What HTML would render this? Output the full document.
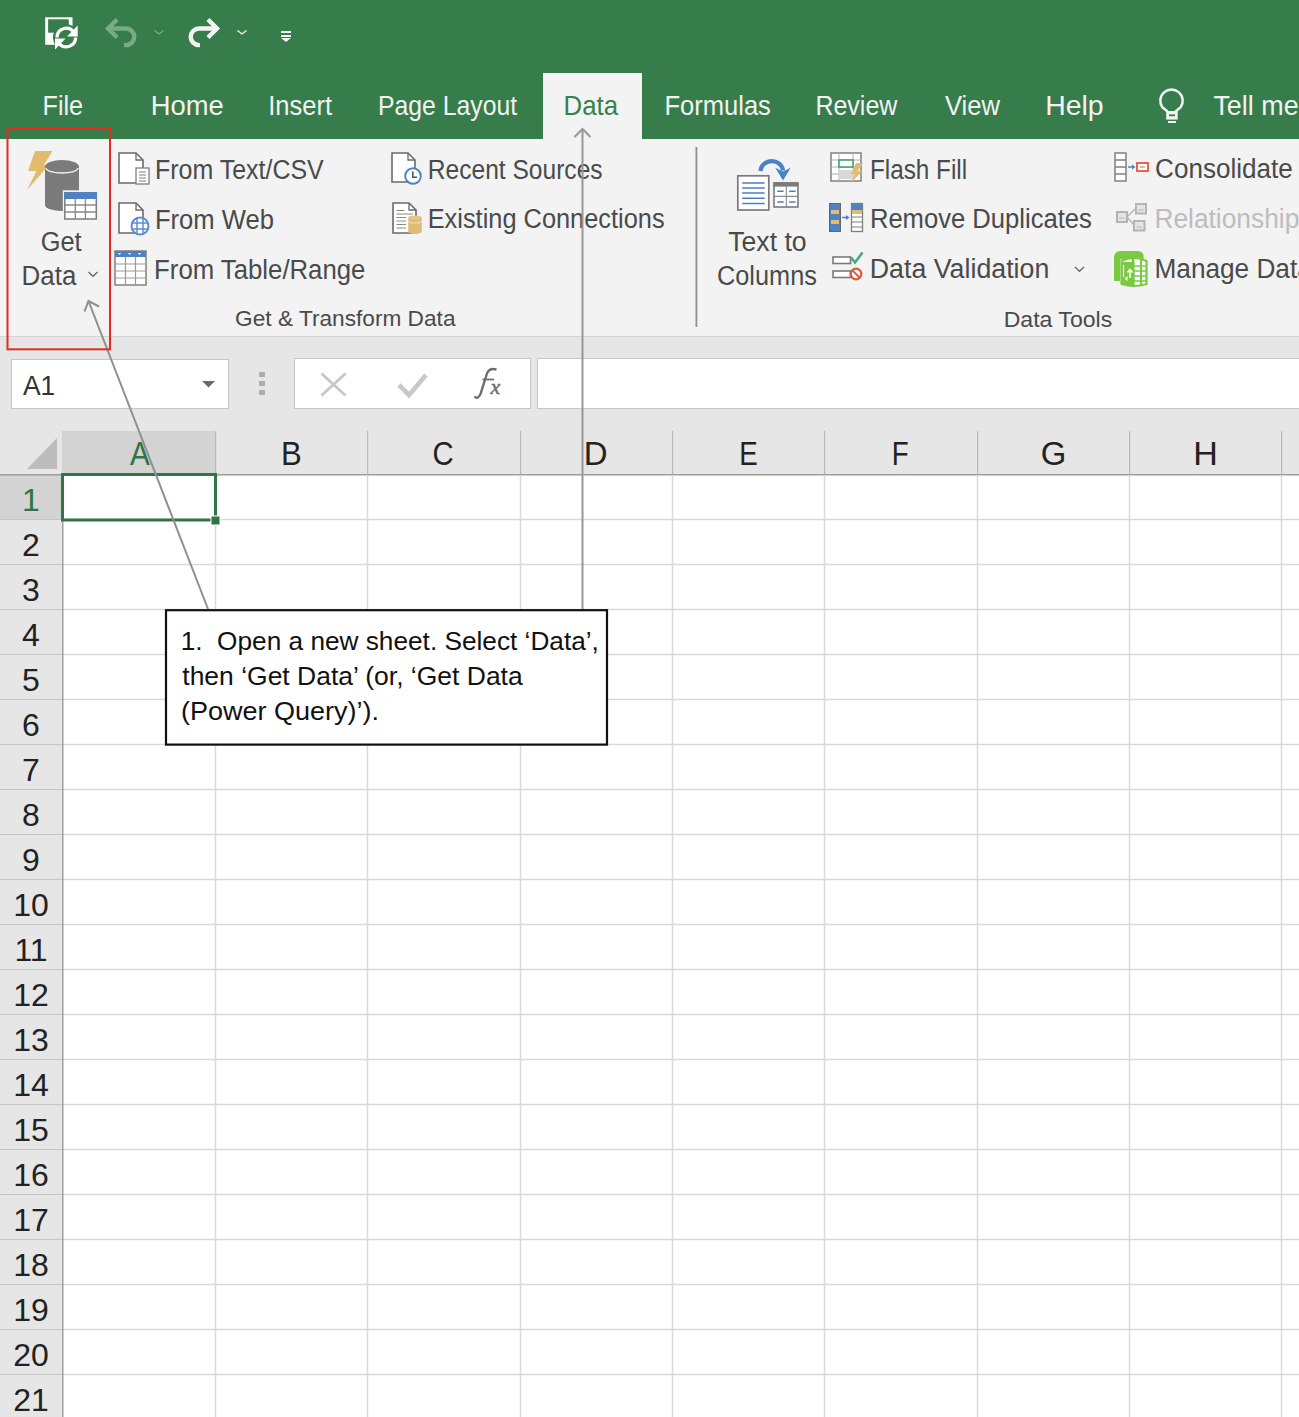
<!DOCTYPE html>
<html><head><meta charset="utf-8"><style>
html,body{margin:0;padding:0;background:#fff;overflow:hidden}
svg{display:block;font-family:"Liberation Sans",sans-serif}
</style></head><body>
<svg width="1299" height="1417" viewBox="0 0 1299 1417">
<rect x="0" y="0" width="1299" height="139" fill="#377d4c"/>
<rect x="0" y="139" width="1299" height="197" fill="#f2f3f2"/>
<rect x="543" y="73" width="99" height="66" fill="#f2f3f2"/>
<rect x="0" y="336" width="1299" height="1" fill="#d4d4d4"/>
<rect x="0" y="337" width="1299" height="138" fill="#e5e6e5"/>
<rect x="45.2" y="17.3" width="27.3" height="27.5" fill="#fff"/><rect x="48.1" y="19.3" width="20.7" height="13.4" fill="#377d4c"/><circle cx="66.3" cy="37.5" r="13.3" fill="#377d4c"/><path d="M57.0 37.5 A9.3 9.3 0 0 1 73.6 31.8" fill="none" stroke="#fff" stroke-width="3.3"/><path d="M75.6 37.5 A9.3 9.3 0 0 1 59.0 43.2" fill="none" stroke="#fff" stroke-width="3.3"/><path d="M77.7 36.5 V25.5 L67 36.5 Z" fill="#fff"/><path d="M55 38.5 V49.5 L65.5 38.5 Z" fill="#fff"/>
<path d="M108 28.5 H126 A8.3 8.3 0 0 1 126 45.1 H124" fill="none" stroke="#79ab85" stroke-width="4.4"/><path d="M115.5 21 L108 28.5 L115.5 36" fill="none" stroke="#79ab85" stroke-width="4.4" stroke-linecap="square"/>
<path d="M154.5 30.5 L159 34 L163.5 30.5" fill="none" stroke="#79ab85" stroke-width="1.3"/>
<path d="M217 28.5 H199 A8.3 8.3 0 0 0 199 45.1 H200" fill="none" stroke="#f4f4f4" stroke-width="4.4"/><path d="M209.5 21 L217 28.5 L209.5 36" fill="none" stroke="#f4f4f4" stroke-width="4.4" stroke-linecap="square"/>
<path d="M237.5 30.5 L242 34 L246.5 30.5" fill="none" stroke="#f4f4f4" stroke-width="1.3"/>
<rect x="281" y="31" width="10" height="2" fill="#f4f4f4"/><rect x="281" y="35" width="10" height="2" fill="#f4f4f4"/><path d="M281 38 H291 L286 42 Z" fill="#f4f4f4"/>
<text x="42.5" y="114.5" font-size="26.89" textLength="40.6" lengthAdjust="spacingAndGlyphs" fill="#f2f2f2" >File</text>
<text x="150.8" y="114.5" font-size="26.89" textLength="73.0" lengthAdjust="spacingAndGlyphs" fill="#f2f2f2" >Home</text>
<text x="268.2" y="114.5" font-size="26.89" textLength="63.9" lengthAdjust="spacingAndGlyphs" fill="#f2f2f2" >Insert</text>
<text x="378.0" y="114.5" font-size="26.89" textLength="139.2" lengthAdjust="spacingAndGlyphs" fill="#f2f2f2" >Page Layout</text>
<text x="664.4" y="114.5" font-size="26.89" textLength="106.5" lengthAdjust="spacingAndGlyphs" fill="#f2f2f2" >Formulas</text>
<text x="815.4" y="114.5" font-size="26.89" textLength="82.0" lengthAdjust="spacingAndGlyphs" fill="#f2f2f2" >Review</text>
<text x="944.9" y="114.5" font-size="26.89" textLength="55.0" lengthAdjust="spacingAndGlyphs" fill="#f2f2f2" >View</text>
<text x="1045.2" y="114.5" font-size="26.89" textLength="58.5" lengthAdjust="spacingAndGlyphs" fill="#f2f2f2" >Help</text>
<text x="1213.4" y="114.5" font-size="26.89" textLength="85.2" lengthAdjust="spacingAndGlyphs" fill="#f2f2f2" >Tell me</text>
<text x="563.5" y="114.5" font-size="26.89" textLength="54.5" lengthAdjust="spacingAndGlyphs" fill="#34824f" >Data</text>
<path d="M1167.5 111.5 L1162.3 107.1 A11.2 11.2 0 1 1 1180.7 107.1 L1175.5 111.5" fill="none" stroke="#f2f2f2" stroke-width="2.5"/><rect x="1166.2" y="111" width="11.5" height="8.6" fill="#f2f2f2"/><rect x="1169" y="114.4" width="6" height="1.8" fill="#377d4c"/><rect x="1168" y="121" width="8" height="2" fill="#f2f2f2"/>
<path d="M35 151 L52.5 151 L44 165 L49 165 L27 190 L36.5 171 L28 171 Z" fill="#e3bb6d"/>
<path d="M45 168 V205 A17 6 0 0 0 79 205 V168 Z" fill="#7b7b7b"/><ellipse cx="62" cy="167" rx="17" ry="7" fill="#7b7b7b"/><path d="M46 168 A16 5 0 0 0 78 168" fill="none" stroke="#f2f3f2" stroke-width="1.3"/>
<rect x="62.8" y="190.3" width="35.6" height="31" fill="#f2f3f2"/><rect x="64.8" y="192.8" width="31.5" height="26.2" fill="#fff" stroke="#7b7b7b" stroke-width="1.5"/><rect x="64.1" y="192.1" width="32.9" height="6.9" fill="#4f82c3"/><path d="M64.8 205 H96.3 M64.8 212 H96.3 M75.3 199 V219 M85.4 199 V219" stroke="#8a8a8a" stroke-width="1.3"/>
<text x="40.7" y="250.8" font-size="27.62" textLength="40.9" lengthAdjust="spacingAndGlyphs" fill="#4a4a4a" >Get</text>
<text x="21.6" y="285.3" font-size="27.62" textLength="54.7" lengthAdjust="spacingAndGlyphs" fill="#4a4a4a" >Data</text>
<path d="M88.5 272 L93 276.3 L97.5 272" fill="none" stroke="#666" stroke-width="1.3"/>
<path d="M119 153 H136 L143 160 V183 H119 Z" fill="#fff" stroke="#6a6a6a" stroke-width="1.6"/><path d="M136 153 V160 H143" fill="none" stroke="#6a6a6a" stroke-width="1.3"/>
<rect x="136" y="168" width="13" height="16" fill="#fff" stroke="#808080" stroke-width="1.3"/><path d="M139 172 H146 M139 175 H146 M139 178 H146 M139 181 H146" stroke="#808080" stroke-width="1"/>
<text x="155.0" y="178.8" font-size="27.62" textLength="168.7" lengthAdjust="spacingAndGlyphs" fill="#4a4a4a" >From Text/CSV</text>
<path d="M119 203 H136 L143 210 V233 H119 Z" fill="#fff" stroke="#6a6a6a" stroke-width="1.6"/><path d="M136 203 V210 H143" fill="none" stroke="#6a6a6a" stroke-width="1.3"/>
<circle cx="140" cy="226" r="8.5" fill="#fff" stroke="#5b8fd0" stroke-width="2"/><path d="M131.5 223 H148.5 M131.5 229 H148.5 M137 218 V234 M143 218 V234" stroke="#5b8fd0" stroke-width="1.5"/>
<text x="154.9" y="228.5" font-size="27.62" textLength="119.0" lengthAdjust="spacingAndGlyphs" fill="#4a4a4a" >From Web</text>
<rect x="115" y="251" width="31" height="34" fill="#fff" stroke="#808080" stroke-width="1.5"/><rect x="115" y="251" width="31" height="6" fill="#4f82c3"/><path d="M118 253 L121 253 L119.5 255 Z M128 253 L131 253 L129.5 255 Z M138 253 L141 253 L139.5 255 Z" fill="#fff"/><path d="M115.5 264 H145.5 M115.5 271 H145.5 M115.5 278 H145.5 M125.5 257 V285 M135.5 257 V285" stroke="#9a9a9a" stroke-width="1.2"/>
<text x="154.1" y="279.0" font-size="27.62" textLength="211.3" lengthAdjust="spacingAndGlyphs" fill="#4a4a4a" >From Table/Range</text>
<path d="M392 153 H408 L415 160 V182 H392 Z" fill="#fff" stroke="#6a6a6a" stroke-width="1.6"/><path d="M408 153 V160 H415" fill="none" stroke="#6a6a6a" stroke-width="1.3"/>
<circle cx="413" cy="176" r="7.8" fill="#fff" stroke="#4a82c8" stroke-width="1.9"/><path d="M412.8 171.5 V177.2 H417" fill="none" stroke="#555" stroke-width="1.6"/>
<text x="427.8" y="178.5" font-size="27.62" textLength="174.8" lengthAdjust="spacingAndGlyphs" fill="#4a4a4a" >Recent Sources</text>
<path d="M393 203 H409 L416 210 V233 H393 Z" fill="#fff" stroke="#6a6a6a" stroke-width="1.6"/><path d="M409 203 V210 H416" fill="none" stroke="#6a6a6a" stroke-width="1.3"/>
<path d="M396.5 210.5 H404.5 M396.5 214 H413 M396.5 217.5 H406 M396.5 221 H406 M396.5 224.5 H406 M396.5 228 H406" stroke="#8a8a8a" stroke-width="1.1"/><path d="M408.2 217.5 V231.5 A6.8 2.5 0 0 0 421.8 231.5 V217.5 Z" fill="#e0bd74"/><ellipse cx="415" cy="217.5" rx="6.8" ry="2" fill="#e6c786"/><path d="M408.2 221 A6.8 2 0 0 0 421.8 221" fill="none" stroke="#f2e3c0" stroke-width="1"/>
<text x="427.7" y="228.4" font-size="27.62" textLength="236.9" lengthAdjust="spacingAndGlyphs" fill="#4a4a4a" >Existing Connections</text>
<text x="235.1" y="326.4" font-size="21.80" textLength="220.4" lengthAdjust="spacingAndGlyphs" fill="#4a4a4a" >Get &amp; Transform Data</text>
<rect x="695.5" y="147" width="1.8" height="180" fill="#8e8e8e"/>
<rect x="737.8" y="175.8" width="31" height="34.2" fill="#fff" stroke="#7a7a7a" stroke-width="1.7"/><path d="M742.2 183 H764.6 M742.2 188 H764.6 M742.2 193 H764.6 M742.2 198.2 H764.6 M742.2 203.4 H764.6" stroke="#4a7fc0" stroke-width="1.5"/>
<rect x="774" y="183" width="24" height="24" fill="#fff" stroke="#7a7a7a" stroke-width="1.6"/><rect x="773.5" y="182.3" width="25" height="4.3" fill="#7a7a7a"/><path d="M786.3 186 V207 M774 196.4 H798" stroke="#8a8a8a" stroke-width="1.1"/><path d="M777.2 191.3 H783.6 M789.2 191.3 H795.6 M777.2 202 H783.6 M789.2 202 H795.6" stroke="#4a7fc0" stroke-width="1.6"/>
<path d="M760.5 171 A11.3 10.6 0 0 1 783 170.5" fill="none" stroke="#4a82c4" stroke-width="4.2"/><path d="M775.3 167.8 L783 180.5 L790.7 167.8 L783 171.5 Z" fill="#4a82c4"/>
<text x="728.2" y="251.2" font-size="27.62" textLength="78.5" lengthAdjust="spacingAndGlyphs" fill="#4a4a4a" >Text to</text>
<text x="717.0" y="284.7" font-size="27.62" textLength="99.9" lengthAdjust="spacingAndGlyphs" fill="#4a4a4a" >Columns</text>
<rect x="831" y="153" width="30" height="28" fill="#fff" stroke="#808080" stroke-width="1.5"/><path d="M831 160 H861 M831 167 H861 M831 174 H861 M839 153 V181 M853 153 V181" stroke="#b0b0b0" stroke-width="1"/><rect x="839" y="160" width="14" height="7" fill="#fff" stroke="#3f9a6e" stroke-width="1.5"/><rect x="839" y="170" width="14" height="9" fill="#d8d8d8"/><path d="M856 163 H863 L858 171 H862 L851 183 L855 174 H851 Z" fill="#e3bb6d"/>
<text x="869.9" y="178.5" font-size="27.62" textLength="97.2" lengthAdjust="spacingAndGlyphs" fill="#4a4a4a" >Flash Fill</text>
<rect x="829.5" y="203.5" width="11" height="28" fill="#4f82c3" stroke="#666" stroke-width="1"/><rect x="831" y="210" width="8" height="4" fill="#e3bb6d"/><rect x="831" y="220" width="8" height="4" fill="#e3bb6d"/><rect x="851.5" y="203.5" width="11" height="28" fill="#fff" stroke="#808080" stroke-width="1.3"/><rect x="852" y="204" width="10" height="6" fill="#4f82c3"/><rect x="852" y="210" width="10" height="4" fill="#e3bb6d"/><path d="M852 217 H862 M852 222 H862 M852 227 H862" stroke="#808080" stroke-width="1"/><path d="M842 217.5 H848" stroke="#4f82c3" stroke-width="1.5"/><path d="M846 215 L849.5 217.5 L846 220 Z" fill="#4f82c3"/>
<text x="869.9" y="228.0" font-size="27.62" textLength="222.0" lengthAdjust="spacingAndGlyphs" fill="#4a4a4a" >Remove Duplicates</text>
<rect x="833" y="257" width="17.5" height="6.5" fill="#fff" stroke="#7a7a7a" stroke-width="1.6"/><rect x="833" y="271" width="17.5" height="6.5" fill="#fff" stroke="#7a7a7a" stroke-width="1.6"/><path d="M851 257.5 L855 262.5 L862.5 252.5" fill="none" stroke="#4aa884" stroke-width="2.6"/><circle cx="856" cy="274" r="5.3" fill="#fff" stroke="#e0583a" stroke-width="2.2"/><path d="M852.5 270.5 L859.5 277.5" stroke="#e0583a" stroke-width="1.8"/>
<text x="869.8" y="278.0" font-size="27.62" textLength="179.5" lengthAdjust="spacingAndGlyphs" fill="#4a4a4a" >Data Validation</text>
<path d="M1075 267 L1079.5 271.3 L1084 267" fill="none" stroke="#666" stroke-width="1.3"/>
<rect x="1115" y="153" width="11" height="28" fill="#fff" stroke="#808080" stroke-width="1.5"/><path d="M1115 160 H1126 M1115 167 H1126 M1115 174 H1126" stroke="#808080" stroke-width="1.3"/><path d="M1128 167 H1134" stroke="#4f82c3" stroke-width="1.5"/><path d="M1132 164.5 L1135.5 167 L1132 169.5 Z" fill="#4f82c3"/><rect x="1137" y="163" width="11" height="8" fill="#fff" stroke="#e0583a" stroke-width="1.8"/><path d="M1140 167 H1145" stroke="#e0583a" stroke-width="1"/>
<text x="1155.1" y="177.5" font-size="27.62" textLength="137.6" lengthAdjust="spacingAndGlyphs" fill="#4a4a4a" >Consolidate</text>
<path d="M1127 217 L1135 209 M1127 217 L1134 225" fill="none" stroke="#b8b8b8" stroke-width="1.5"/><g fill="#e4e4e4" stroke="#b4b4b4" stroke-width="2"><rect x="1117" y="212" width="10" height="10"/><rect x="1136" y="204" width="10" height="9.5"/><rect x="1134" y="221" width="10.5" height="9.5"/></g><path d="M1119.5 218 H1124.5 M1138.5 210 H1143.5 M1136.5 227 H1141.5" stroke="#b4b4b4" stroke-width="1"/>
<text x="1154.4" y="228.0" font-size="27.62" textLength="158.1" lengthAdjust="spacingAndGlyphs" fill="#bdbdbd" >Relationships</text>
<path d="M1114 281 V258 Q1114 251 1121 251 H1137 Q1143.6 251 1143.6 257 V259.5 H1120 V281 Z" fill="#7ac943"/><path d="M1121.5 261 Q1134 255 1146.5 261 V284 Q1134 288 1121.5 284 Z" fill="#fff" stroke="#7ac943" stroke-width="2.2"/><path d="M1122 262 H1134.5 V285 H1122 Z" fill="#7ac943"/><path d="M1133 259 V286" stroke="#7ac943" stroke-width="2.6"/><path d="M1141 259.5 V285.5" stroke="#7ac943" stroke-width="2"/><path d="M1134 266 H1146 M1134 271 H1146 M1134 276 H1146 M1134 281 H1146" stroke="#7ac943" stroke-width="1.6"/><path d="M1130 270 V278 M1127.5 272.5 L1130 269.5 L1132.5 272.5" fill="none" stroke="#fff" stroke-width="1.5"/><path d="M1124.5 278.5 L1127.5 276 V281 Z" fill="#fff"/><path d="M1123.5 265 V277" stroke="#fff" stroke-width="1.2"/>
<text x="1154.5" y="278.0" font-size="27.62" textLength="235.9" lengthAdjust="spacingAndGlyphs" fill="#4a4a4a" >Manage Data Model</text>
<text x="1003.7" y="326.5" font-size="21.80" textLength="108.5" lengthAdjust="spacingAndGlyphs" fill="#4a4a4a" >Data Tools</text>
<rect x="11.5" y="359.5" width="217" height="49" fill="#fff" stroke="#c6c6c6" stroke-width="1"/>
<text x="22.9" y="394.6" font-size="27.62" textLength="32.3" lengthAdjust="spacingAndGlyphs" fill="#333" >A1</text>
<path d="M202 381 H215 L208.5 387.5 Z" fill="#6a6a6a"/>
<rect x="259" y="372" width="6" height="5" fill="#adadad"/><rect x="259" y="381" width="6" height="5" fill="#adadad"/><rect x="259" y="390" width="6" height="5" fill="#adadad"/>
<rect x="294.5" y="358.5" width="236" height="50" fill="#fff" stroke="#c6c6c6" stroke-width="1"/>
<path d="M321.5 373.5 L345.5 395.5 M345.5 373.5 L321.5 395.5" stroke="#c8c8c8" stroke-width="3"/>
<path d="M399 385 L409 395 L426 375" fill="none" stroke="#c8c8c8" stroke-width="4.6"/>
<path d="M474.5 396.5 Q477.5 400 480.5 394 L486.8 374 Q489 367.5 496.5 369.5" fill="none" stroke="#6e6e6e" stroke-width="2.4"/><path d="M482.5 379.5 H494" stroke="#6e6e6e" stroke-width="1.8"/><text x="490.5" y="394" font-family="Liberation Serif" font-style="italic" font-size="22" fill="#6e6e6e" stroke="#6e6e6e" stroke-width="0.5">x</text>
<rect x="537.5" y="358.5" width="1299" height="50" fill="#fff" stroke="#c6c6c6" stroke-width="1"/>
<rect x="62" y="475" width="1237" height="942" fill="#fff"/>
<rect x="0" y="475" width="62" height="942" fill="#e5e6e5"/>
<rect x="62" y="431" width="153" height="43" fill="#d3d3d3"/>
<rect x="0" y="475" width="62" height="45" fill="#d3d3d3"/>
<rect x="215" y="431" width="1.2" height="44" fill="#bababa"/>
<rect x="367" y="431" width="1.2" height="44" fill="#bababa"/>
<rect x="520" y="431" width="1.2" height="44" fill="#bababa"/>
<rect x="672" y="431" width="1.2" height="44" fill="#bababa"/>
<rect x="824" y="431" width="1.2" height="44" fill="#bababa"/>
<rect x="977" y="431" width="1.2" height="44" fill="#bababa"/>
<rect x="1129" y="431" width="1.2" height="44" fill="#bababa"/>
<rect x="1281" y="431" width="1.2" height="44" fill="#bababa"/>
<rect x="0" y="474" width="1299" height="1.5" fill="#9e9e9e"/>
<path d="M57 438 V469 H27 Z" fill="#bcbcbc"/>
<rect x="214.75" y="475" width="1.5" height="942" fill="#d9d9d9"/>
<rect x="366.75" y="475" width="1.5" height="942" fill="#d9d9d9"/>
<rect x="519.75" y="475" width="1.5" height="942" fill="#d9d9d9"/>
<rect x="671.75" y="475" width="1.5" height="942" fill="#d9d9d9"/>
<rect x="823.75" y="475" width="1.5" height="942" fill="#d9d9d9"/>
<rect x="976.75" y="475" width="1.5" height="942" fill="#d9d9d9"/>
<rect x="1128.75" y="475" width="1.5" height="942" fill="#d9d9d9"/>
<rect x="1280.75" y="475" width="1.5" height="942" fill="#d9d9d9"/>
<rect x="62" y="518.75" width="1237" height="1.5" fill="#d9d9d9"/>
<rect x="0" y="519" width="62" height="1" fill="#c4c4c4"/>
<rect x="62" y="563.75" width="1237" height="1.5" fill="#d9d9d9"/>
<rect x="0" y="564" width="62" height="1" fill="#c4c4c4"/>
<rect x="62" y="608.75" width="1237" height="1.5" fill="#d9d9d9"/>
<rect x="0" y="609" width="62" height="1" fill="#c4c4c4"/>
<rect x="62" y="653.75" width="1237" height="1.5" fill="#d9d9d9"/>
<rect x="0" y="654" width="62" height="1" fill="#c4c4c4"/>
<rect x="62" y="698.75" width="1237" height="1.5" fill="#d9d9d9"/>
<rect x="0" y="699" width="62" height="1" fill="#c4c4c4"/>
<rect x="62" y="743.75" width="1237" height="1.5" fill="#d9d9d9"/>
<rect x="0" y="744" width="62" height="1" fill="#c4c4c4"/>
<rect x="62" y="788.75" width="1237" height="1.5" fill="#d9d9d9"/>
<rect x="0" y="789" width="62" height="1" fill="#c4c4c4"/>
<rect x="62" y="833.75" width="1237" height="1.5" fill="#d9d9d9"/>
<rect x="0" y="834" width="62" height="1" fill="#c4c4c4"/>
<rect x="62" y="878.75" width="1237" height="1.5" fill="#d9d9d9"/>
<rect x="0" y="879" width="62" height="1" fill="#c4c4c4"/>
<rect x="62" y="923.75" width="1237" height="1.5" fill="#d9d9d9"/>
<rect x="0" y="924" width="62" height="1" fill="#c4c4c4"/>
<rect x="62" y="968.75" width="1237" height="1.5" fill="#d9d9d9"/>
<rect x="0" y="969" width="62" height="1" fill="#c4c4c4"/>
<rect x="62" y="1013.75" width="1237" height="1.5" fill="#d9d9d9"/>
<rect x="0" y="1014" width="62" height="1" fill="#c4c4c4"/>
<rect x="62" y="1058.75" width="1237" height="1.5" fill="#d9d9d9"/>
<rect x="0" y="1059" width="62" height="1" fill="#c4c4c4"/>
<rect x="62" y="1103.75" width="1237" height="1.5" fill="#d9d9d9"/>
<rect x="0" y="1104" width="62" height="1" fill="#c4c4c4"/>
<rect x="62" y="1148.75" width="1237" height="1.5" fill="#d9d9d9"/>
<rect x="0" y="1149" width="62" height="1" fill="#c4c4c4"/>
<rect x="62" y="1193.75" width="1237" height="1.5" fill="#d9d9d9"/>
<rect x="0" y="1194" width="62" height="1" fill="#c4c4c4"/>
<rect x="62" y="1238.75" width="1237" height="1.5" fill="#d9d9d9"/>
<rect x="0" y="1239" width="62" height="1" fill="#c4c4c4"/>
<rect x="62" y="1283.75" width="1237" height="1.5" fill="#d9d9d9"/>
<rect x="0" y="1284" width="62" height="1" fill="#c4c4c4"/>
<rect x="62" y="1328.75" width="1237" height="1.5" fill="#d9d9d9"/>
<rect x="0" y="1329" width="62" height="1" fill="#c4c4c4"/>
<rect x="62" y="1373.75" width="1237" height="1.5" fill="#d9d9d9"/>
<rect x="0" y="1374" width="62" height="1" fill="#c4c4c4"/>
<rect x="62" y="475" width="1.5" height="942" fill="#a0a0a0"/>
<text x="129.9" y="465.3" font-size="32.41" textLength="19.8" lengthAdjust="spacingAndGlyphs" fill="#2e7545" >A</text>
<text x="281.0" y="465.3" font-size="32.41" textLength="20.7" lengthAdjust="spacingAndGlyphs" fill="#222" >B</text>
<text x="432.5" y="465.3" font-size="32.41" textLength="21.1" lengthAdjust="spacingAndGlyphs" fill="#222" >C</text>
<text x="583.8" y="465.3" font-size="32.41" textLength="23.8" lengthAdjust="spacingAndGlyphs" fill="#222" >D</text>
<text x="739.2" y="465.3" font-size="32.41" textLength="18.5" lengthAdjust="spacingAndGlyphs" fill="#222" >E</text>
<text x="891.7" y="465.3" font-size="32.41" textLength="16.9" lengthAdjust="spacingAndGlyphs" fill="#222" >F</text>
<text x="1040.8" y="465.3" font-size="32.41" textLength="25.6" lengthAdjust="spacingAndGlyphs" fill="#222" >G</text>
<text x="1193.2" y="465.3" font-size="32.41" textLength="24.6" lengthAdjust="spacingAndGlyphs" fill="#222" >H</text>
<text x="31" y="510.5" font-size="31.98" text-anchor="middle" fill="#2e7545">1</text>
<text x="31" y="555.5" font-size="31.98" text-anchor="middle" fill="#222">2</text>
<text x="31" y="600.5" font-size="31.98" text-anchor="middle" fill="#222">3</text>
<text x="31" y="645.5" font-size="31.98" text-anchor="middle" fill="#222">4</text>
<text x="31" y="690.5" font-size="31.98" text-anchor="middle" fill="#222">5</text>
<text x="31" y="735.5" font-size="31.98" text-anchor="middle" fill="#222">6</text>
<text x="31" y="780.5" font-size="31.98" text-anchor="middle" fill="#222">7</text>
<text x="31" y="825.5" font-size="31.98" text-anchor="middle" fill="#222">8</text>
<text x="31" y="870.5" font-size="31.98" text-anchor="middle" fill="#222">9</text>
<text x="31" y="915.5" font-size="31.98" text-anchor="middle" fill="#222">10</text>
<text x="31" y="960.5" font-size="31.98" text-anchor="middle" fill="#222">11</text>
<text x="31" y="1005.5" font-size="31.98" text-anchor="middle" fill="#222">12</text>
<text x="31" y="1050.5" font-size="31.98" text-anchor="middle" fill="#222">13</text>
<text x="31" y="1095.5" font-size="31.98" text-anchor="middle" fill="#222">14</text>
<text x="31" y="1140.5" font-size="31.98" text-anchor="middle" fill="#222">15</text>
<text x="31" y="1185.5" font-size="31.98" text-anchor="middle" fill="#222">16</text>
<text x="31" y="1230.5" font-size="31.98" text-anchor="middle" fill="#222">17</text>
<text x="31" y="1275.5" font-size="31.98" text-anchor="middle" fill="#222">18</text>
<text x="31" y="1320.5" font-size="31.98" text-anchor="middle" fill="#222">19</text>
<text x="31" y="1365.5" font-size="31.98" text-anchor="middle" fill="#222">20</text>
<text x="31" y="1410.5" font-size="31.98" text-anchor="middle" fill="#222">21</text>
<rect x="62.5" y="474.5" width="153" height="45.5" fill="none" stroke="#2f7545" stroke-width="3"/>
<rect x="211" y="516" width="9" height="9" fill="#2f7545" stroke="#fff" stroke-width="1"/>
<path d="M582.5 609 V129" stroke="#979797" stroke-width="2"/><path d="M574.5 137 L582.5 129 L590.5 137" fill="none" stroke="#979797" stroke-width="2"/>
<path d="M208 609 L88.5 301" stroke="#8f8f8f" stroke-width="2"/><path d="M84.5 311.5 L88.5 301 L99 306.5" fill="none" stroke="#8f8f8f" stroke-width="2"/>
<rect x="7.5" y="128" width="102.5" height="221.3" fill="none" stroke="#e52a20" stroke-width="2"/>
<rect x="166" y="610.2" width="441" height="134.4" fill="#fff" stroke="#111" stroke-width="2.2"/>
<text x="180.7" y="649.7" font-size="26.16" textLength="418.2" lengthAdjust="spacingAndGlyphs" fill="#111" style="white-space:pre">1.  Open a new sheet. Select ‘Data’,</text>
<text x="182.3" y="684.7" font-size="26.16" textLength="340.4" lengthAdjust="spacingAndGlyphs" fill="#111" >then ‘Get Data’ (or, ‘Get Data</text>
<text x="181.0" y="720.0" font-size="26.16" textLength="198.1" lengthAdjust="spacingAndGlyphs" fill="#111" >(Power Query)’).</text>
</svg>
</body></html>
